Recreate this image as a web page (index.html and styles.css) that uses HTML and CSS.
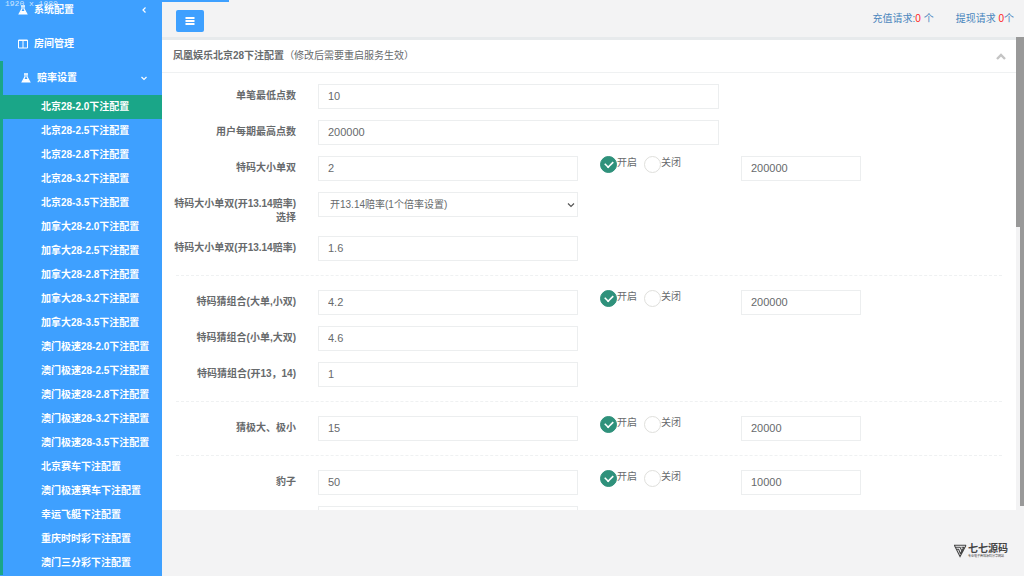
FILE: index.html
```html
<!DOCTYPE html>
<html lang="zh-CN">

<head>
    <meta charset="utf-8">
    <title>下注配置</title>
    <link rel="stylesheet" href="styles.css">
</head>

<body>
    <nav class="sidebar">
        <span class="resolution">1920 x 1080</span>
        <ul class="menu">
            <li>
                <a href="#" class="menu-link">
                    <svg class="icon" viewBox="0 0 10 10"><path d="M3 .8h4M4 .8v3L1.200 9h7.600L6 3.800v-3" fill="none" stroke="#fff" stroke-width="1.200"/><path d="M3 6h4l1.500 3h-7z" fill="#fff"/></svg>
                    系统配置
                    <svg class="arrow" viewBox="0 0 8 8"><path d="M5.500 1.500L3 4l2.500 2.500" fill="none" stroke="#fff" stroke-width="1.200"/></svg>
                </a>
            </li>
            <li>
                <a href="#" class="menu-link">
                    <svg class="icon" viewBox="0 0 10 10"><path d="M.5 1h9v8h-9zM5 1v8M.5 1.500h9" fill="none" stroke="#fff"/></svg>
                    房间管理
                </a>
            </li>
            <li class="open">
                <a href="#" class="menu-link">
                    <svg class="icon" viewBox="0 0 10 10"><path d="M3 .8h4M4 .8v3L1.200 9h7.600L6 3.800v-3" fill="none" stroke="#fff" stroke-width="1.200"/><path d="M3 6h4l1.500 3h-7z" fill="#fff"/></svg>
                    赔率设置
                    <svg class="arrow" viewBox="0 0 8 8"><path d="M1.500 3L4 5.500 6.500 3" fill="none" stroke="#fff" stroke-width="1.200"/></svg>
                </a>
                <ul class="submenu">
                    <li><a href="#" class="active">北京28-2.0下注配置</a></li>
                    <li><a href="#">北京28-2.5下注配置</a></li>
                    <li><a href="#">北京28-2.8下注配置</a></li>
                    <li><a href="#">北京28-3.2下注配置</a></li>
                    <li><a href="#">北京28-3.5下注配置</a></li>
                    <li><a href="#">加拿大28-2.0下注配置</a></li>
                    <li><a href="#">加拿大28-2.5下注配置</a></li>
                    <li><a href="#">加拿大28-2.8下注配置</a></li>
                    <li><a href="#">加拿大28-3.2下注配置</a></li>
                    <li><a href="#">加拿大28-3.5下注配置</a></li>
                    <li><a href="#">澳门极速28-2.0下注配置</a></li>
                    <li><a href="#">澳门极速28-2.5下注配置</a></li>
                    <li><a href="#">澳门极速28-2.8下注配置</a></li>
                    <li><a href="#">澳门极速28-3.2下注配置</a></li>
                    <li><a href="#">澳门极速28-3.5下注配置</a></li>
                    <li><a href="#">北京赛车下注配置</a></li>
                    <li><a href="#">澳门极速赛车下注配置</a></li>
                    <li><a href="#">幸运飞艇下注配置</a></li>
                    <li><a href="#">重庆时时彩下注配置</a></li>
                    <li><a href="#">澳门三分彩下注配置</a></li>
                </ul>
            </li>
        </ul>
    </nav>

    <div class="page">
        <div class="progress"></div>
        <header class="topbar">
            <button type="button" class="toggle" aria-label="菜单">
                <svg viewBox="0 0 10 10"><path d="M.5 2h9M.5 5h9M.5 8h9" stroke="#fff" stroke-width="1.800"/></svg>
            </button>
            <div class="requests">
                <a href="#">充值请求:<b>0</b> 个</a>
                <a href="#">提现请求 <b>0</b>个</a>
            </div>
        </header>

        <div class="scroller">
            <main class="panel">
                <div class="panel-title">
                    <h1>凤凰娱乐北京28下注配置</h1>
                    <small>（修改后需要重启服务生效）</small>
                    <button type="button" class="collapse" aria-label="收起">
                        <svg viewBox="0 0 10 10"><path d="M1 8l4-4 4 4" fill="none" stroke="#c4c4c4" stroke-width="2.400"/></svg>
                    </button>
                </div>
                <form class="form">
                    <div class="row">
                        <label for="min">单笔最低点数</label>
                        <input type="text" id="min" class="wide" value="10">
                    </div>
                    <div class="row">
                        <label for="max">用户每期最高点数</label>
                        <input type="text" id="max" class="wide" value="200000">
                    </div>
                    <div class="row">
                        <label for="dxds">特码大小单双</label>
                        <input type="text" id="dxds" value="2">
                        <div class="switch">
                            <label><input type="radio" name="s1" checked>开启</label>
                            <label><input type="radio" name="s1">关闭</label>
                        </div>
                        <input type="text" aria-label="特码大小单双限额" value="200000">
                    </div>
                    <div class="row">
                        <label for="mode">特码大小单双(开13.14赔率)选择</label>
                        <select id="mode">
                            <option>开13.14赔率(1个倍率设置)</option>
                        </select>
                    </div>
                    <div class="row">
                        <label for="dxds2">特码大小单双(开13.14赔率)</label>
                        <input type="text" id="dxds2" value="1.6">
                    </div>
                    <hr>
                    <div class="row">
                        <label for="zh1">特码猜组合(大单,小双)</label>
                        <input type="text" id="zh1" value="4.2">
                        <div class="switch">
                            <label><input type="radio" name="s2" checked>开启</label>
                            <label><input type="radio" name="s2">关闭</label>
                        </div>
                        <input type="text" aria-label="特码猜组合限额" value="200000">
                    </div>
                    <div class="row">
                        <label for="zh2">特码猜组合(小单,大双)</label>
                        <input type="text" id="zh2" value="4.6">
                    </div>
                    <div class="row">
                        <label for="zh3">特码猜组合(开13，14)</label>
                        <input type="text" id="zh3" value="1">
                    </div>
                    <hr>
                    <div class="row">
                        <label for="jd">猜极大、极小</label>
                        <input type="text" id="jd" value="15">
                        <div class="switch">
                            <label><input type="radio" name="s3" checked>开启</label>
                            <label><input type="radio" name="s3">关闭</label>
                        </div>
                        <input type="text" aria-label="猜极大、极小限额" value="20000">
                    </div>
                    <hr>
                    <div class="row">
                        <label for="bz">豹子</label>
                        <input type="text" id="bz" value="50">
                        <div class="switch">
                            <label><input type="radio" name="s4" checked>开启</label>
                            <label><input type="radio" name="s4">关闭</label>
                        </div>
                        <input type="text" aria-label="豹子限额" value="10000">
                    </div>
                    <div class="row">
                        <span></span>
                        <input type="text" aria-label="赔率">
                    </div>
                </form>
            </main>
            <div class="scrollbar">
                <div class="thumb"></div>
                <div class="track"></div>
            </div>
        </div>

        <footer class="footer">
            <svg class="logo" viewBox="0 0 14 14"><path d="M0 .7h13M1 3h5.500l2.500 5M2.500 5.200H5l2 5M13 .7L6.500 13 .5 1M10.500 3L6.800 10M8 3h3" fill="none" stroke="#444" stroke-width="1.100"/></svg>
            <div class="brand">
                <strong>七七源码</strong>
                <span>专业电子商城源码分享网站</span>
            </div>
        </footer>
    </div>
</body>

</html>
```

FILE: styles.css
```css
* {
    box-sizing: border-box;
}

body {
    margin: 0;
    height: 100vh;
    display: flex;
    overflow: hidden;
    background: #f3f3f4;
    color: #676a6c;
    font-family: "Liberation Sans", "Noto Sans CJK SC", sans-serif;
    font-size: 10px;
    line-height: 14px;
}

a {
    text-decoration: none;
}

ul {
    list-style: none;
    margin: 0;
    padding: 0;
}

button {
    border: none;
    background: none;
    padding: 0;
    cursor: pointer;
}

/* sidebar */
.sidebar {
    position: relative;
    flex: 0 0 162px;
    overflow: hidden;
    background: #3ea0ff;
    font-weight: bold;
}

.resolution {
    position: absolute;
    left: 5px;
    top: -2px;
    color: #cde5ff;
    font: 8px/12px "Liberation Mono", monospace;
}

.menu {
    margin-top: -7px;
}

.menu a {
    color: #fff;
}

.menu-link {
    display: flex;
    align-items: center;
    gap: 6px;
    height: 34px;
    padding: 0 14px 0 18px;
}

.icon {
    width: 10px;
    height: 10px;
}

.arrow {
    width: 8px;
    height: 8px;
    margin-left: auto;
}

.open {
    border-left: 3px solid #1aa688;
}

.submenu a {
    display: block;
    padding-left: 38px;
    line-height: 24px;
}

.submenu .active {
    background: #1aa688;
}

/* page */
.page {
    flex: 1;
    min-width: 0;
    display: flex;
    flex-direction: column;
}

.progress {
    width: 67px;
    height: 2px;
    background: #3ea0ff;
}

.topbar {
    display: flex;
    align-items: center;
    justify-content: space-between;
    height: 35px;
    padding: 0 10px 2px 14px;
}

.toggle {
    width: 28px;
    height: 22px;
    margin-top: 4px;
    border-radius: 2px;
    background: #3ea0ff;
}

.toggle svg {
    display: block;
    width: 10px;
    height: 10px;
    margin: auto;
}

.requests {
    display: flex;
    gap: 22px;
}

.requests a {
    color: #4a86bd;
}

.requests b {
    color: #f22;
    font-weight: normal;
}

.scroller {
    display: flex;
    flex: 1;
    min-height: 0;
}

.panel {
    flex: 1;
    overflow: hidden;
    border-top: 3px solid #e7eaec;
    background: #fff;
}

.panel-title {
    display: flex;
    align-items: center;
    height: 33px;
    padding: 0 10px 0 11px;
    border-bottom: 1px solid #eff1f2;
}

.panel-title h1 {
    margin: 0;
    font-size: 10px;
}

.panel-title small {
    font-size: 10px;
}

.collapse {
    margin-left: auto;
}

.collapse svg {
    display: block;
    width: 10px;
    height: 10px;
}

.form {
    padding: 11px 14px 11px 8px;
}

.row {
    display: grid;
    grid-template-columns: 126px 260px 119px 120px;
    column-gap: 22px;
    margin-bottom: 11px;
}

.row > label {
    padding-top: 5px;
    font-weight: bold;
    text-align: right;
}

input[type="text"],
select {
    width: 100%;
    height: 25px;
    padding: 0 9px;
    border: 1px solid #eceeef;
    border-radius: 0;
    background: #fff;
    color: #676a6c;
    font: inherit;
}

input[type="text"] {
    padding-bottom: 1px;
    font-size: 11px;
}

/* thin chevron in place of the native one */
select {
    appearance: none;
    padding: 0 11px;
    background: #fff url("data:image/svg+xml,%3Csvg xmlns='http://www.w3.org/2000/svg' viewBox='0 0 8 8'%3E%3Cpath d='M1 2.500l3 3 3-3' fill='none' stroke='%23555' stroke-width='1.200'/%3E%3C/svg%3E") no-repeat right 2px center / 8px 8px;
}

.row .wide {
    grid-column: 2 / 4;
}

hr {
    margin: 14px 0 14px 6px;
    border: 0;
    border-top: 1px dashed #eff1f2;
}

.switch {
    display: flex;
    gap: 7px;
    height: 18px;
}

.switch label {
    display: flex;
}

.switch input {
    appearance: none;
    display: grid;
    place-items: center;
    width: 17px;
    height: 17px;
    margin: 0;
    border: 1px solid #dfdfdc;
    border-radius: 50%;
}

.switch input:checked {
    border-color: #2f917b;
    background: #2f917b;
}

.switch input:checked::before {
    content: "";
    width: 8px;
    height: 5px;
    margin-bottom: 2px;
    border: solid #fff;
    border-width: 0 0 2px 2px;
    transform: rotate(-45deg) scale(0.8);
}

.scrollbar {
    display: flex;
    flex-direction: column;
    align-items: flex-end;
    width: 8px;
    padding-bottom: 4px;
}

.thumb {
    width: 8px;
    height: 190px;
    background: #999;
}

.track {
    flex: 1;
    width: 4px;
    background: #999;
}

.footer {
    display: flex;
    justify-content: flex-end;
    gap: 1px;
    height: 66px;
    padding: 34px 16px 0 0;
}

.logo {
    width: 13px;
    height: 14px;
}

.brand {
    color: #444;
}

.brand strong {
    display: block;
    font: bold 10px/10px "Liberation Serif", "Noto Sans CJK SC", serif;
}

.brand span {
    display: block;
    font-size: 3px;
    line-height: 4px;
}
```
